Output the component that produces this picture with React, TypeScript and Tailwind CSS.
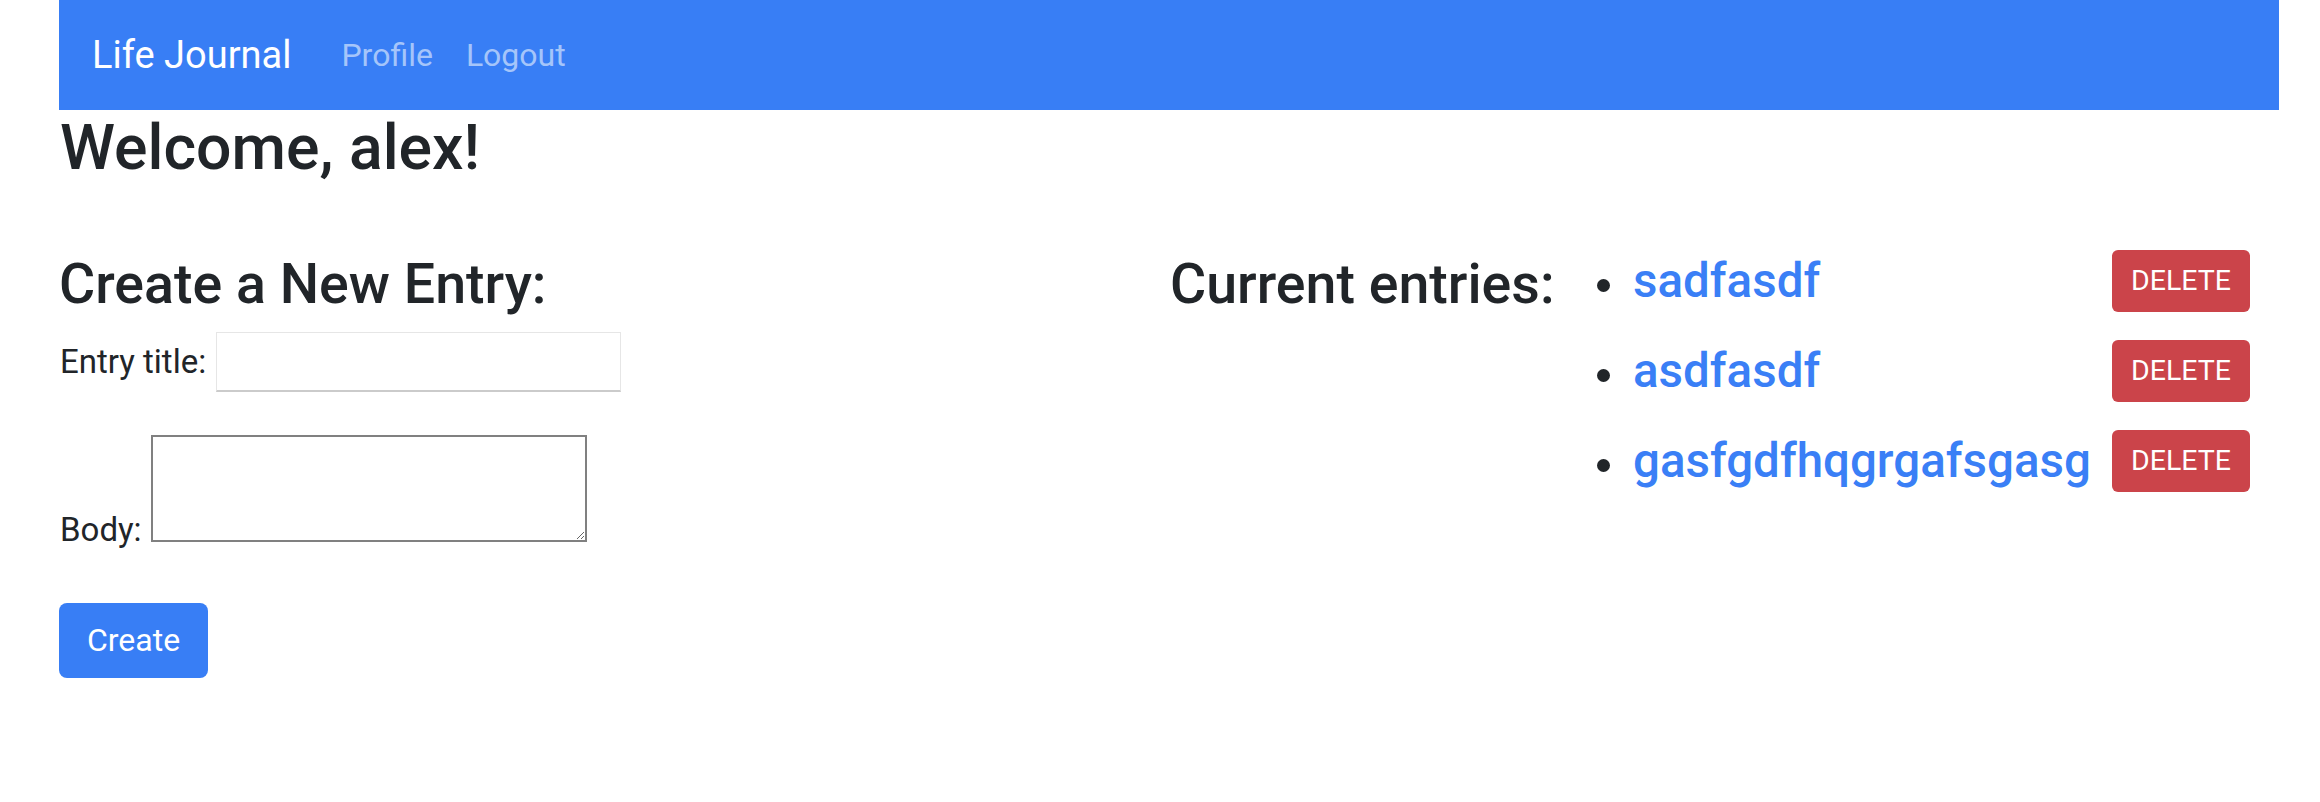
import React from "react";

const entries = ["sadfasdf", "asdfasdf", "gasfgdfhqgrgafsgasg"];

export default function App() {
  return (
    <div className="min-h-screen bg-white font-['Roboto','Liberation_Sans',sans-serif] text-[#212529]">
      <div className="ml-[59px] w-[2220px]">
        <nav className="flex h-[110px] items-center bg-[#387ef5] pl-[33px]">
          <a href="#" className="text-[38px] leading-[1.5] text-white">
            Life Journal
          </a>
          <a href="#" className="ml-[50px] text-[32px] leading-[1.5] text-[#a5c5fa]">
            Profile
          </a>
          <a href="#" className="ml-[33px] text-[32px] leading-[1.5] text-[#a5c5fa]">
            Logout
          </a>
        </nav>

        <h2 className="pl-px text-[62.5px] font-medium leading-[1.2]">Welcome, alex!</h2>

        <div className="mt-[67px] grid grid-cols-2">
          <div>
            <h3 className="mb-[13px] text-[55.5px] font-medium leading-[1.2]">Create a New Entry:</h3>
            <form onSubmit={(e) => e.preventDefault()}>
              <div className="flex h-[60px] items-center">
                <label className="ml-px text-[33px] leading-[1.5]">Entry title:</label>
                <input
                  type="text"
                  className="ml-[10px] h-[60px] w-[405px] border border-[#e6e6e6] border-b-2 border-b-[#cbcbcb] bg-white px-2 text-[31px] outline-none"
                />
              </div>
              <div className="mt-[43px] flex items-end">
                <label className="-mb-[4px] ml-px text-[33px] leading-none">Body:</label>
                <textarea className="ml-[9px] h-[107px] w-[436px] border-2 border-[#808080] bg-white text-[26px] outline-none" />
              </div>
              <button
                type="submit"
                className="mt-[61px] flex h-[75px] w-[149px] items-center justify-center rounded-[8px] bg-[#387ef5] text-[32px] text-white"
              >
                Create
              </button>
            </form>
          </div>

          <div className="flex pr-[29px]">
            <h3 className="w-[428px] shrink-0 pl-px text-[55.5px] font-medium leading-[1.2]">Current entries:</h3>
            <ul className="-mt-[2px] flex-1">
              {entries.map((t) => (
                <li key={t} className="mb-[28px] flex h-[62px] items-center">
                  <span className="mr-[23px] mt-[8px] h-[13px] w-[13px] shrink-0 rounded-full bg-[#212529]" />
                  <a href="#" className="text-[47.5px] font-medium leading-[1.2] text-[#3a7ff6]">
                    {t}
                  </a>
                  <button className="ml-auto flex h-[62px] w-[138px] shrink-0 items-center justify-center rounded-[6px] bg-[#cb444a] text-[28.5px] uppercase text-white">
                    Delete
                  </button>
                </li>
              ))}
            </ul>
          </div>
        </div>
      </div>
    </div>
  );
}
